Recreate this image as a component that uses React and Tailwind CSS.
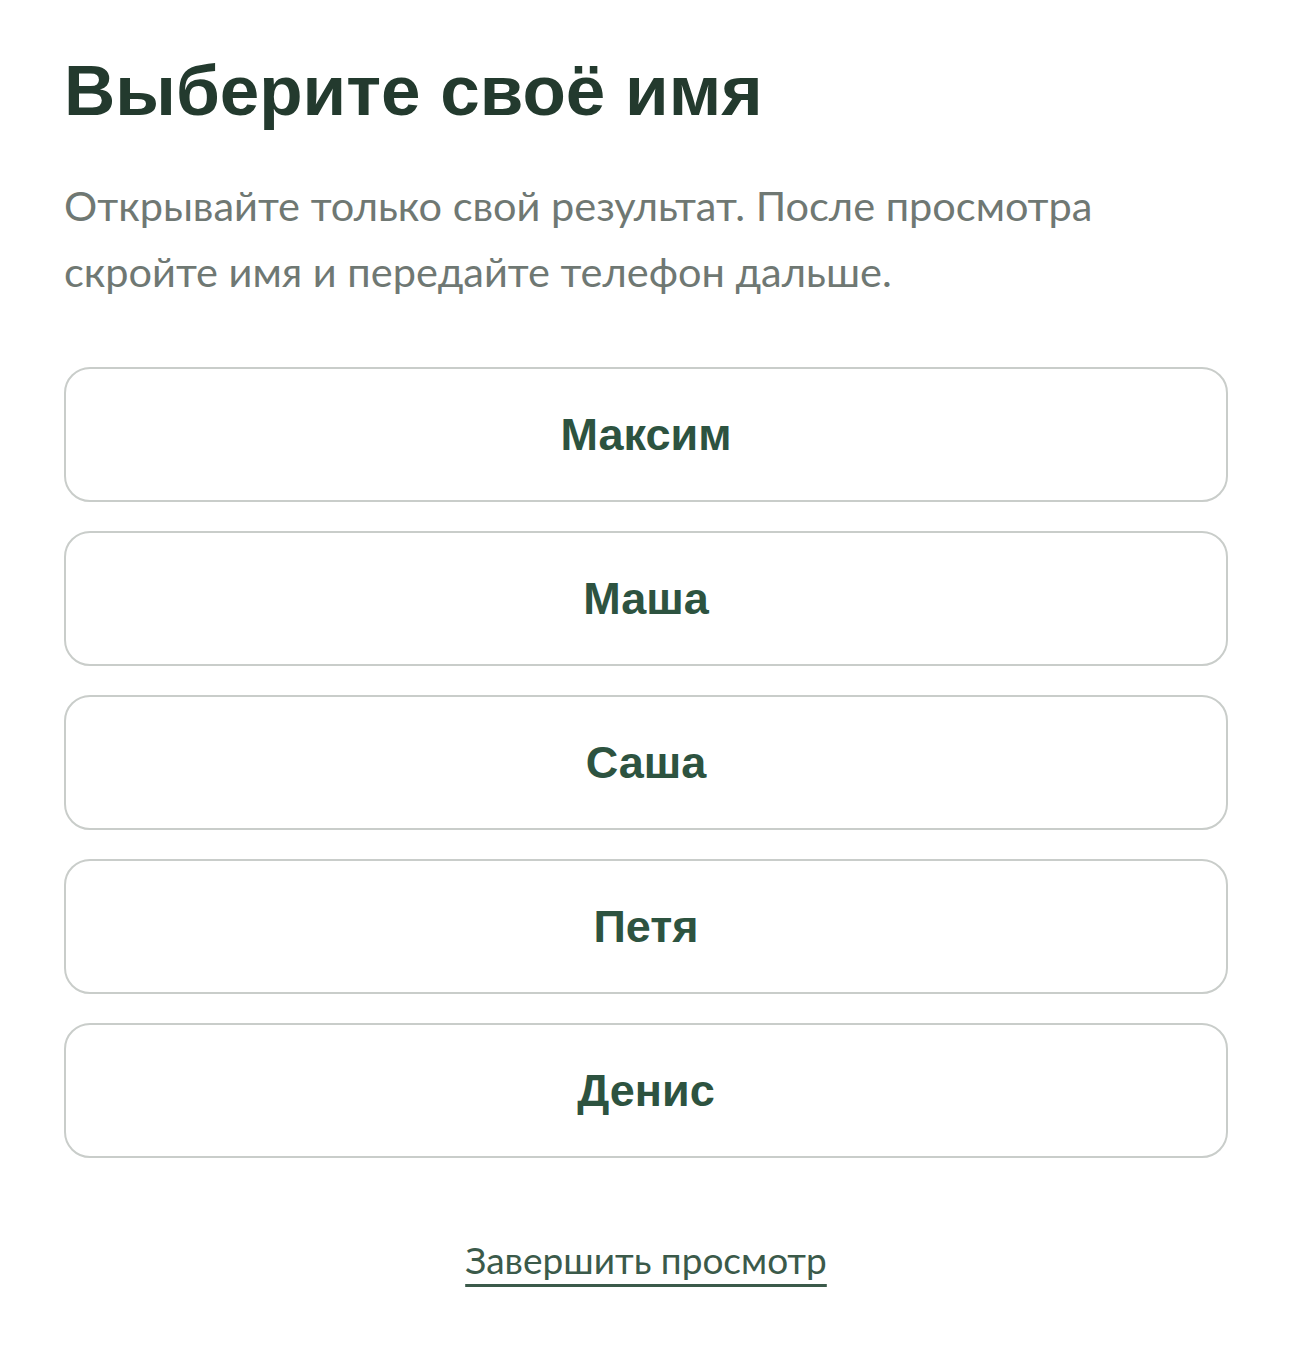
export default function App() {
  const names = ["Максим", "Маша", "Саша", "Петя", "Денис"];

  return (
    <div className="min-h-[1353px] bg-white pl-[64px] pr-[62px] pt-[49px]">
      {/* Heading */}
      <h1 className="font-['Liberation_Sans',Arial,sans-serif] text-[71px] font-bold leading-[84px] text-[#233a2e]">
        Выберите своё имя
      </h1>

      {/* Hint */}
      <p className="mt-[39px] max-w-[1100px] font-['Lato',sans-serif] text-[41.5px] leading-[66px] text-[#6f7873]">
        Открывайте только свой результат. После просмотра скройте имя и передайте телефон дальше.
      </p>

      {/* Names */}
      <div className="mt-[63px] flex flex-col gap-[29px]">
        {names.map((name) => (
          <button
            key={name}
            className="flex h-[135px] w-full items-center justify-center rounded-[26px] border-2 border-[#c9cdca] bg-white font-['Liberation_Sans',Arial,sans-serif] text-[45px] font-bold text-[#2d5340]"
          >
            {name}
          </button>
        ))}
      </div>

      {/* Finish */}
      <div className="mt-[76px] flex justify-center">
        <a
          href="#"
          className="font-['Lato',sans-serif] text-[37px] leading-[52px] text-[#3b5a4a] underline decoration-[3px] underline-offset-[10px]"
        >
          Завершить просмотр
        </a>
      </div>
    </div>
  );
}
